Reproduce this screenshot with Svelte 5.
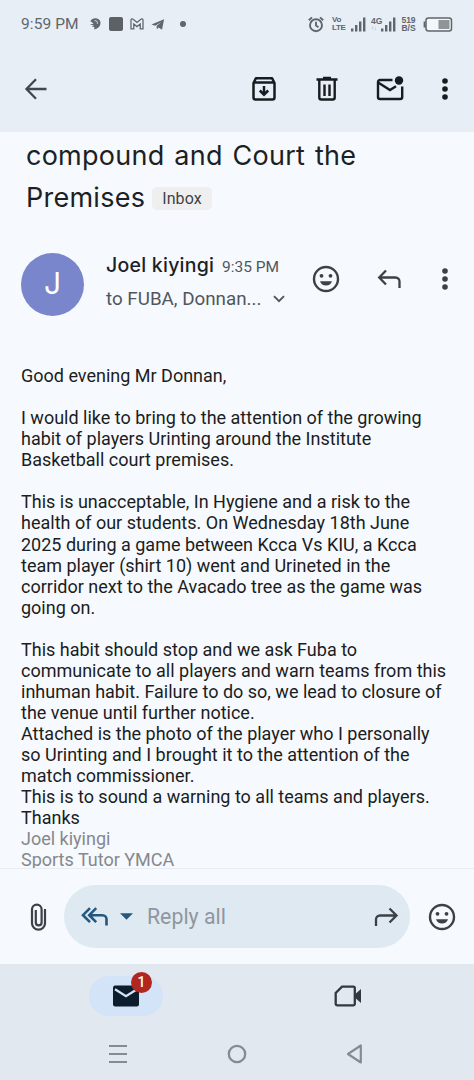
<script lang="ts">
  const subject = ['compound and Court the', 'Premises'];

  const sender = {
    name: 'Joel kiyingi',
    initial: 'J',
    time: '9:35 PM',
    recipients: 'to FUBA, Donnan...'
  };

  const body = [
    'Good evening Mr Donnan,',
    '',
    'I would like to bring to the attention of the growing',
    'habit of players Urinting around the Institute',
    'Basketball court premises.',
    '',
    'This is unacceptable, In Hygiene and a risk to the',
    'health of our students. On Wednesday 18th June',
    '2025 during a game between Kcca Vs KIU, a Kcca',
    'team player (shirt 10) went and Urineted in the',
    'corridor next to the Avacado tree as the game was',
    'going on.',
    '',
    'This habit should stop and we ask Fuba to',
    'communicate to all players and warn teams from this',
    'inhuman habit. Failure to do so, we lead to closure of',
    'the venue until further notice.',
    'Attached is the photo of the player who I personally',
    'so Urinting and I brought it to the attention of the',
    'match commissioner.',
    'This is to sound a warning to all teams and players.',
    'Thanks'
  ];

  const signature = ['Joel kiyingi', 'Sports Tutor YMCA'];

  let unread = $state(1);
</script>

{#snippet smiley()}
  <svg width="28" height="28" viewBox="0 0 28 28">
    <circle cx="14" cy="14" r="12" fill="none" stroke="currentColor" stroke-width="2.4" />
    <circle cx="9.5" cy="10.800" r="1.900" fill="currentColor" />
    <circle cx="18.5" cy="10.800" r="1.900" fill="currentColor" />
    <path d="M8 16.200h12c-.8 2.700-3.100 4.300-6 4.300s-5.200-1.600-6-4.300z" fill="currentColor" />
  </svg>
{/snippet}

{#snippet dots()}
  <svg width="8" height="24" viewBox="0 0 8 24" fill="currentColor">
    <circle cx="4" cy="4" r="2.800" />
    <circle cx="4" cy="12" r="2.800" />
    <circle cx="4" cy="20" r="2.800" />
  </svg>
{/snippet}

{#snippet signal()}
  <svg width="15" height="15" viewBox="0 0 15 15" fill="currentColor">
    <rect x="0" y="11.500" width="2.400" height="3" />
    <rect x="4" y="8" width="2.400" height="6.500" />
    <rect x="8" y="4.500" width="2.400" height="10" />
    <rect x="12" y="0.500" width="2.400" height="14" />
  </svg>
{/snippet}

<div class="phone">
  <div class="status">
    <span class="clock">9:59 PM</span>
    <div class="notices">
      <svg width="13" height="14" viewBox="0 0 14 14" fill="currentColor">
        <path d="M1.500 4C3 1 6 .5 8.500 1c3 .6 4.300 3 3.800 6-.5 3.200-3 5-6.800 6l.4-2.800L3 10l2.500-1.500L1 7.800l4-1.300z" />
        <path d="M6 3.500c2-.5 3.500 1 3 3.200" fill="none" stroke="#e7eef6" stroke-width="1" />
      </svg>
      <span class="square"></span>
      <svg width="14" height="12" viewBox="0 0 15 13" fill="none" stroke="currentColor" stroke-width="1.400">
        <path d="M1 11.800V2.200C1 .9 2.400.5 3.300 1.300L7.500 4.800l4.200-3.500C12.600.5 14 .9 14 2.200v9.600h-3V6.500L7.500 9.300 4 6.500v5.300z" />
      </svg>
      <svg class="plane" width="14" height="13" viewBox="0 0 15 13" fill="currentColor">
        <path d="M.5 6.600 14 .8 11.800 12.200 8.300 9.800 6.300 11.600 6 8.200 11 3.800 4.500 7.900z" />
      </svg>
      <span class="more"></span>
    </div>
    <div class="system">
      <svg width="16" height="17" viewBox="0 0 16 17" fill="none" stroke="currentColor" stroke-width="1.900">
        <circle cx="8" cy="9.200" r="6" />
        <path d="M8 5.800v3.700l2.500 1.700M.8 4.200 4 1.400M15.200 4.200 12 1.400" />
      </svg>
      <span class="tiny volte"><b>Vo</b><b>LTE</b></span>
      <span class="bars">{@render signal()}</span>
      <span class="tiny net"><b>4G</b><i>↑↓</i></span>
      <span class="bars second">{@render signal()}</span>
      <span class="tiny speed"><b>519</b><b>B/S</b></span>
      <svg class="battery" width="30" height="15" viewBox="0 0 30 15">
        <rect x="3" y="1" width="25.500" height="13" rx="2.500" fill="#f3f6fa" stroke="currentColor" stroke-width="1.500" />
        <path d="M1.600 4.500v6" stroke="currentColor" stroke-width="2" />
        <rect x="15.500" y="3" width="11" height="9" fill="#8f9499" />
      </svg>
    </div>
  </div>

  <header class="toolbar">
    <svg class="back" width="24" height="24" viewBox="0 0 24 24" fill="none" stroke="currentColor" stroke-width="2.300">
      <path d="M22.500 12H3M12 2.300 2.500 12l9.500 9.700" />
    </svg>
    <svg width="26" height="26" viewBox="0 0 26 26" fill="none" stroke="currentColor" stroke-width="2.500">
      <path d="M2.500 7 5 2.200h16L23.500 7v14.500a2 2 0 0 1-2 2h-17a2 2 0 0 1-2-2zM2.500 6.500h21" stroke-linejoin="round" />
      <path d="M13 10v8.500M8.800 14.500l4.200 4.200 4.200-4.200" />
    </svg>
    <svg class="trash" width="22" height="26" viewBox="0 0 22 26" fill="none" stroke="currentColor" stroke-width="2.400">
      <path d="M.5 3.500h21M7 2h8M3.300 4v17.500a2 2 0 0 0 2 2h11.400a2 2 0 0 0 2-2V4M8.500 8.500v11.500M13.500 8.500v11.500" />
    </svg>
    <svg class="unread" width="28" height="26" viewBox="0 0 28 26" fill="none" stroke="currentColor" stroke-width="2.400">
      <path d="M16.500 4H4a2 2 0 0 0-2 2v15a2 2 0 0 0 2 2h20.200a2 2 0 0 0 2-2V10.500" />
      <path d="m2.500 6.800 11.500 7.200 6-3.700" />
      <circle cx="23" cy="4.500" r="4.200" fill="currentColor" stroke="none" />
    </svg>
    {@render dots()}
  </header>

  <main>
    <h1>
      <span class="title">{subject[0]}</span>
      <span class="row"><span class="title last">{subject[1]}</span><span class="label">Inbox</span></span>
    </h1>

    <section class="sender">
      <div class="avatar">{sender.initial}</div>
      <div class="who">
        <div class="name"><strong>{sender.name}</strong><span>{sender.time}</span></div>
        <div class="to">
          <span>{sender.recipients}</span>
          <svg width="12" height="8" viewBox="0 0 12 8" fill="none" stroke="currentColor" stroke-width="1.900">
            <path d="m1 1.200 5 5 5-5" />
          </svg>
        </div>
      </div>
      <div class="actions">
        {@render smiley()}
        <svg class="reply" width="25" height="20" viewBox="0 0 25 20" fill="none" stroke="currentColor" stroke-width="2.300">
          <path d="M9 1.500 2.200 8.500 9 15.500M2.500 8.500h16a4 4 0 0 1 4 4V19" />
        </svg>
        {@render dots()}
      </div>
    </section>

    <article>
      {#each body as line}
        <p>{line}</p>
      {/each}
      {#each signature as line}
        <p class="sig">{line}</p>
      {/each}
    </article>
  </main>

  <div class="composer">
    <svg class="clip" width="17" height="28" viewBox="0 0 16 28" fill="none" stroke="currentColor" stroke-width="2.200">
      <path d="M14.500 6v14.200a6.500 6.500 0 0 1-13 0V6.500a4.800 4.800 0 0 1 9.600 0v13a2.900 2.900 0 0 1-5.800 0V7" />
    </svg>
    <div class="field">
      <svg class="all" width="27" height="20" viewBox="0 0 27 20" fill="none" stroke="currentColor" stroke-width="2.600">
        <path d="M9 1.200 2 8.200l7 7M15.200 1.200l-7 7 7 7M8.500 8.200h13a4 4 0 0 1 4 4v6.300" />
      </svg>
      <svg class="caret" width="13" height="7" viewBox="0 0 14 7"><path d="M0 0h14L7 7z" fill="currentColor" /></svg>
      <span class="hint">Reply all</span>
      <svg class="forward" width="25" height="20" viewBox="0 0 25 20" fill="none" stroke="currentColor" stroke-width="2.300">
        <path d="m15.500 1.500 7 7-7 7M22.500 8.500H6a4 4 0 0 0-4 4V19" />
      </svg>
    </div>
    {@render smiley()}
  </div>

  <footer>
    <div class="tabs">
      <div class="tab">
        <svg width="28" height="22" viewBox="0 0 28 22">
          <rect x="1" y="0.500" width="26" height="21" rx="2.200" fill="#0c1d2b" />
          <path d="m3 4.200 11 7 11-7" fill="none" stroke="#d3e3f8" stroke-width="2.300" />
        </svg>
        <span class="badge">{unread}</span>
      </div>
      <svg class="meet" width="28" height="22" viewBox="0 0 28 22">
        <path d="M8 1.700h11.300a1.500 1.500 0 0 1 1.500 1.500v15.600a1.500 1.500 0 0 1-1.500 1.500H3.200a1.500 1.500 0 0 1-1.500-1.500V8z" fill="none" stroke="currentColor" stroke-width="2.300" />
        <path d="M21 9.300 27 4v14l-6-5.300z" fill="currentColor" />
      </svg>
    </div>
    <div class="keys">
      <svg width="18" height="20" viewBox="0 0 18 20" stroke="currentColor" stroke-width="2.200">
        <path d="M0 2h18M0 10h18M0 18h18" />
      </svg>
      <svg width="20" height="20" viewBox="0 0 20 20"><circle cx="10" cy="10" r="8.200" fill="none" stroke="currentColor" stroke-width="2.300" /></svg>
      <svg width="17" height="20" viewBox="0 0 17 20"><path d="M14.800 1.500v17L2 10z" fill="none" stroke="currentColor" stroke-width="2.200" stroke-linejoin="round" /></svg>
    </div>
  </footer>
</div>

<style>
  :global(body) {
    margin: 0;
    background: #f6f9fe;
  }

  .phone {
    width: 474px;
    height: 1080px;
    display: flex;
    flex-direction: column;
    overflow: hidden;
    background: #f6f9fe;
    color: #1c1f24;
    font-family: Roboto, 'Liberation Sans', sans-serif;
  }

  svg {
    display: block;
    flex: none;
  }

  .status {
    height: 48px;
    box-sizing: border-box;
    padding: 0 21px;
    display: flex;
    align-items: center;
    background: #e7eef6;
    color: #60666c;
  }

  .clock {
    width: 68px;
    font-size: 15.5px;
    letter-spacing: 0.1px;
    white-space: nowrap;
  }

  .notices {
    display: flex;
    align-items: center;
  }

  .square {
    width: 14px;
    height: 14px;
    margin: 0 7px;
    border-radius: 2px;
    background: #5c6166;
  }

  .plane {
    margin-left: 7px;
  }

  .more {
    width: 6px;
    height: 6px;
    margin-left: 15px;
    border-radius: 50%;
    background: currentColor;
  }

  .system {
    flex: 1;
    display: flex;
    align-items: center;
    justify-content: flex-end;
  }

  .tiny {
    display: flex;
    flex-direction: column;
    font-family: 'Liberation Sans', sans-serif;
    font-size: 8px;
    line-height: 8px;
    white-space: nowrap;
  }

  .tiny b {
    font-weight: 600;
  }

  .tiny i {
    font-style: normal;
    font-size: 6px;
    line-height: 7px;
    opacity: 0.5;
  }

  .volte {
    width: 14px;
    margin-left: 8px;
    letter-spacing: -0.3px;
  }

  .bars {
    margin-left: 5px;
  }

  .net {
    width: 11px;
    margin-left: 5px;
    font-size: 8.5px;
  }

  .bars.second {
    margin-left: -1px;
  }

  .speed {
    width: 15px;
    margin-left: 5px;
    align-items: center;
    font-size: 8.5px;
  }

  .battery {
    margin-left: 7px;
  }

  .toolbar {
    height: 84px;
    box-sizing: border-box;
    padding: 0 25px 2px 24px;
    display: flex;
    align-items: center;
    background: #e7eef6;
    color: #181c20;
  }

  .back {
    margin-right: auto;
    color: #42474d;
  }

  .trash {
    margin: 0 38px 0 39px;
  }

  .unread {
    margin-right: 37px;
  }

  main {
    height: 736px;
    overflow: hidden;
  }

  h1 {
    margin: 0;
    padding: 3px 0 0 26px;
    font-family: Inter, sans-serif;
    font-size: 27px;
    font-weight: 400;
    line-height: 42px;
    letter-spacing: 0.25px;
    word-spacing: 2px;
    white-space: nowrap;
  }

  h1 span {
    display: block;
  }

  h1 .row {
    display: flex;
    align-items: center;
  }

  h1 .last {
    width: 126px;
  }

  h1 .label {
    width: 60px;
    height: 23px;
    border-radius: 5px;
    background: #efeff0;
    color: #3f4347;
    font-family: Roboto, sans-serif;
    font-size: 16px;
    line-height: 23px;
    letter-spacing: 0.1px;
    text-align: center;
  }

  .sender {
    height: 64px;
    margin: 33px 25px 0 21px;
    display: flex;
    align-items: center;
  }

  .avatar {
    width: 63px;
    height: 63px;
    border-radius: 50%;
    background: #7986cb;
    color: #fff;
    font-family: Inter, sans-serif;
    font-size: 30px;
    line-height: 61px;
    text-align: center;
  }

  .who {
    width: 186px;
    margin: -4px 0 0 22px;
    white-space: nowrap;
  }

  .name,
  .to {
    display: flex;
    align-items: baseline;
  }

  .name {
    height: 34px;
    line-height: 30px;
  }

  .name strong {
    width: 116px;
    font-family: Inter, sans-serif;
    font-size: 19.5px;
    font-weight: 500;
    letter-spacing: 0.25px;
  }

  .name span {
    color: #51565c;
    font-size: 15.5px;
  }

  .to {
    height: 30px;
    align-items: center;
    color: #51565c;
    font-size: 18.8px;
  }

  .to span {
    width: 167px;
  }

  .actions {
    flex: 1;
    display: flex;
    justify-content: space-between;
    align-items: center;
    margin: -10px 0 0 20px;
    color: #3c4147;
  }

  .reply {
    margin-right: 2px;
  }

  article {
    padding: 49px 0 0 21px;
    font-size: 18px;
    line-height: 21.07px;
    color: #1b1d21;
    white-space: nowrap;
  }

  article p {
    height: 21.07px;
    margin: 0;
  }

  article .sig {
    color: #85888c;
  }

  .composer {
    height: 96px;
    box-sizing: border-box;
    padding: 0 18px 0 30px;
    border-top: 1px solid #e9ecf1;
    display: flex;
    align-items: center;
    color: #3c4147;
  }

  .field {
    width: 347px;
    height: 63px;
    box-sizing: border-box;
    margin: 0 18px 0 17px;
    padding: 0 11px 0 17px;
    display: flex;
    align-items: center;
    border-radius: 32px;
    background: #dfe9f2;
  }

  .all,
  .caret {
    color: #23597f;
  }

  .caret {
    margin: 0 14px 0 12px;
  }

  .hint {
    flex: 1;
    color: #8f969e;
    font-size: 21.3px;
  }

  footer {
    height: 116px;
    background: #e1e8f0;
  }

  .tabs {
    height: 63px;
    display: flex;
    align-items: center;
  }

  .tab {
    position: relative;
    width: 74px;
    height: 40px;
    margin-left: 89px;
    display: flex;
    align-items: center;
    justify-content: center;
    border-radius: 20px;
    background: #d3e3f8;
  }

  .badge {
    position: absolute;
    top: -4px;
    left: 42px;
    width: 21px;
    height: 21px;
    border-radius: 50%;
    background: #b3261e;
    color: #fff;
    font-size: 14px;
    font-weight: 500;
    line-height: 21px;
    text-align: center;
  }

  .meet {
    margin-left: 171px;
    color: #33383f;
  }

  .keys {
    height: 53px;
    padding: 0 111px 0 109px;
    display: flex;
    justify-content: space-between;
    align-items: center;
    box-sizing: border-box;
    color: #868b91;
  }
</style>
